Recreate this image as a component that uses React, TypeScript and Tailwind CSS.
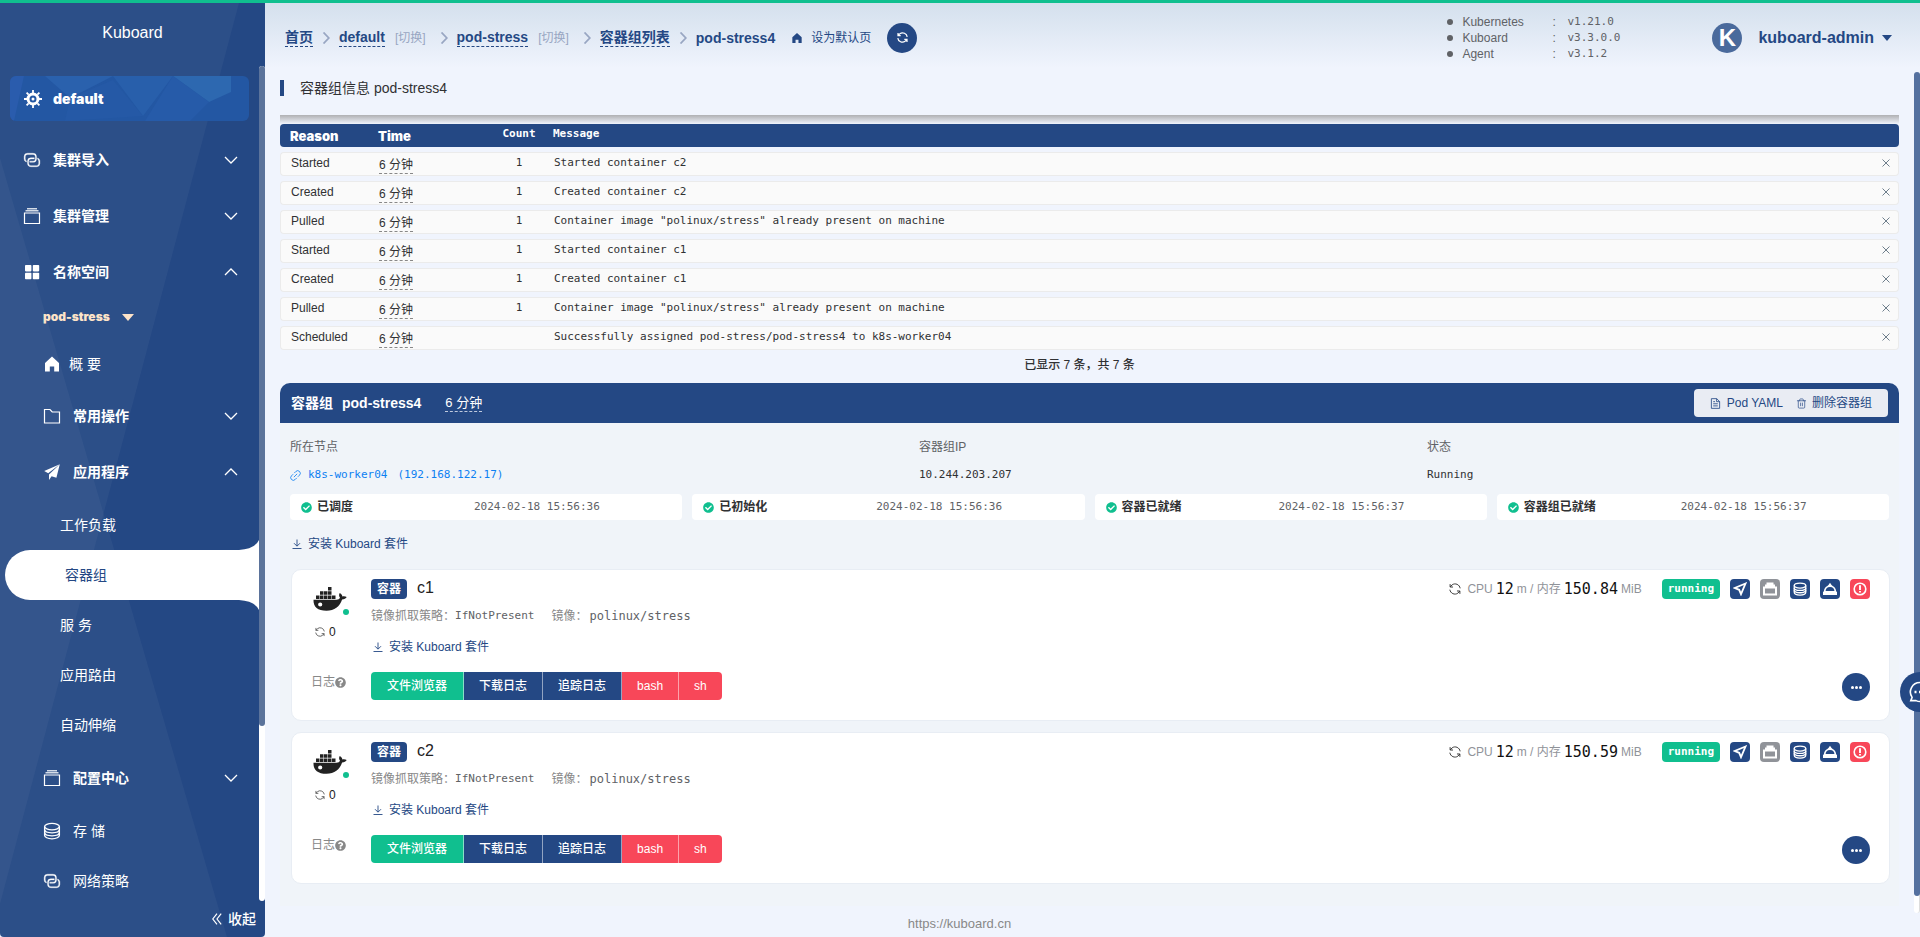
import React from 'react';
import { Trash2 } from 'lucide-react';
import { FaCheckCircle, FaQuestionCircle } from 'react-icons/fa';

interface PodEvent {
  reason: string;
  count?: number;
  message: string;
}

interface Container {
  name: string;
  memory: string;
}

const events: PodEvent[] = [
  { reason: 'Started', count: 1, message: 'Started container c2' },
  { reason: 'Created', count: 1, message: 'Created container c2' },
  { reason: 'Pulled', count: 1, message: 'Container image "polinux/stress" already present on machine' },
  { reason: 'Started', count: 1, message: 'Started container c1' },
  { reason: 'Created', count: 1, message: 'Created container c1' },
  { reason: 'Pulled', count: 1, message: 'Container image "polinux/stress" already present on machine' },
  { reason: 'Scheduled', message: 'Successfully assigned pod-stress/pod-stress4 to k8s-worker04' },
];

const conditions = [
  { label: '已调度', time: '2024-02-18 15:56:36' },
  { label: '已初始化', time: '2024-02-18 15:56:36' },
  { label: '容器已就绪', time: '2024-02-18 15:56:37' },
  { label: '容器组已就绪', time: '2024-02-18 15:56:37' },
];

const versions = [
  { name: 'Kubernetes', value: 'v1.21.0' },
  { name: 'Kuboard', value: 'v3.3.0.0' },
  { name: 'Agent', value: 'v3.1.2' },
];

const containers: Container[] = [
  { name: 'c1', memory: '150.84' },
  { name: 'c2', memory: '150.59' },
];

const mono = "font-['DejaVu_Sans_Mono','Noto_Sans_CJK_SC',monospace]";
const black = "font-['Inter','Noto_Sans_CJK_SC',sans-serif] font-black";

/* ---------- icons ---------- */

interface IconProps {
  className?: string;
}

function GearIcon({ className }: IconProps) {
  return (
    <svg viewBox="0 0 18 18" className={className} fill="none" stroke="currentColor">
      <circle cx="9" cy="9" r="5" strokeWidth="3" />
      <circle cx="9" cy="9" r="1.5" fill="currentColor" stroke="none" />
      <path
        d="M9 0v3M9 15v3M0 9h3M15 9h3M2.6 2.6l2 2M13.4 13.4l2 2M15.4 2.6l-2 2M4.6 13.4l-2 2"
        strokeWidth="1.8"
      />
    </svg>
  );
}

function ConnectionIcon({ className }: IconProps) {
  return (
    <svg viewBox="0 0 1024 1024" className={className} fill="currentColor" stroke="currentColor" strokeWidth="20">
      <path d="M640 384v64H448a128 128 0 0 0-128 128v128a128 128 0 0 0 128 128h320a128 128 0 0 0 128-128V576a128 128 0 0 0-64-110.848V394.88c74.56 26.368 128 97.472 128 181.056v128a192 192 0 0 1-192 192H448a192 192 0 0 1-192-192V576a192 192 0 0 1 192-192h192z" />
      <path d="M384 640v-64h192a128 128 0 0 0 128-128V320a128 128 0 0 0-128-128H256a128 128 0 0 0-128 128v128a128 128 0 0 0 64 110.848v70.272A192.064 192.064 0 0 1 64 448V320a192 192 0 0 1 192-192h320a192 192 0 0 1 192 192v128a192 192 0 0 1-192 192H384z" />
    </svg>
  );
}

function FilesIcon({ className }: IconProps) {
  return (
    <svg viewBox="0 0 18 18" className={className} fill="none" stroke="currentColor">
      <path d="M1.5 6h15v10.5h-15z" strokeWidth="1.2" />
      <path d="M2.5 3.8h13M4 1.8h10" strokeWidth="1.4" strokeOpacity="0.8" />
    </svg>
  );
}

function GridIcon({ className }: IconProps) {
  return (
    <svg viewBox="0 0 18 18" className={className} fill="currentColor">
      <rect x="2" y="2" width="6.4" height="6.4" rx="0.8" />
      <rect x="9.8" y="2" width="6.4" height="6.4" rx="0.8" />
      <rect x="2" y="9.8" width="6.4" height="6.4" rx="0.8" />
      <rect x="9.8" y="9.8" width="6.4" height="6.4" rx="0.8" />
    </svg>
  );
}

function HomeIcon({ className }: IconProps) {
  return (
    <svg viewBox="0 0 18 18" className={className} fill="currentColor">
      <path d="M9 1.5 2 8v8.5h4.8v-5h4.4v5H16V8z" />
    </svg>
  );
}

function FolderIcon({ className }: IconProps) {
  return (
    <svg viewBox="0 0 18 18" className={className} fill="none" stroke="currentColor" strokeWidth="1.2">
      <path d="M1.5 2.5h5.5l2.2 2.5h7.3v11h-15z" />
    </svg>
  );
}

function PlaneIcon({ className }: IconProps) {
  return (
    <svg viewBox="0 0 18 18" className={className} fill="currentColor">
      <path d="M16.8 1.2 1.2 8l4 2.2zM16.8 1.2 6 11.4V17l2.6-3.8 4.8 1.6z" />
    </svg>
  );
}

function CoinIcon({ className, strokeWidth = 1.3 }: IconProps & { strokeWidth?: number }) {
  return (
    <svg viewBox="0 0 18 18" className={className} fill="none" stroke="currentColor" strokeWidth={strokeWidth}>
      <ellipse cx="9" cy="4.6" rx="7.4" ry="3.2" />
      <path d="M1.6 4.6v8.6c0 1.9 3.1 3.6 7.400 3.600s7.400-1.700 7.400-3.600V4.600" />
      <path d="M1.600 7.600c0 1.800 3.100 3.200 7.400 3.200s7.400-1.400 7.400-3.200M1.600 10.600c0 1.800 3.100 3.200 7.400 3.200s7.400-1.400 7.400-3.200" />
    </svg>
  );
}

function ChevronIcon({ up, className }: IconProps & { up?: boolean }) {
  return (
    <svg viewBox="0 0 14 14" className={className} fill="none" stroke="currentColor" strokeWidth="1.3">
      <path d={up ? 'M1 10l6-6 6 6' : 'M1 4l6 6 6-6'} />
    </svg>
  );
}

function RefreshIcon({ className, strokeWidth = 1.1 }: IconProps & { strokeWidth?: number }) {
  return (
    <svg viewBox="0 0 14 14" className={className} fill="none" stroke="currentColor" strokeWidth={strokeWidth}>
      <path d="M1 7.8a6 6 0 0 0 9.3 4.1M13 6.2a6 6 0 0 0-9.3-4.1" />
      <path d="M1.3 1.3v3.4h3.4M12.7 12.7V9.3H9.3M1.3 4.7l2.4-2.6M12.7 9.3l-2.4 2.6" />
    </svg>
  );
}

function DownloadIcon({ className }: IconProps) {
  return (
    <svg viewBox="0 0 12 12" className={className} fill="none" stroke="currentColor" strokeWidth="0.9">
      <path d="M6 1.5v6.5M3 5.2l3 3 3-3M1.5 10.5h9" />
    </svg>
  );
}

function DocumentIcon({ className }: IconProps) {
  return (
    <svg viewBox="0 0 12 12" className={className} fill="none" stroke="currentColor" strokeWidth="0.9">
      <path d="M1.5.7h5.8l3.2 3.2v7.4h-9zM7.2.7V4h3.3M3.5 4h2M3.5 6.3h5M3.5 8.6h5" />
    </svg>
  );
}

function LinkIcon({ className }: IconProps) {
  return (
    <svg viewBox="0 0 12 12" className={className} fill="none" stroke="currentColor" strokeWidth="0.9">
      <path d="M4.6 3.4l1.8-1.8a2.8 2.8 0 0 1 4 4L8.6 7.4M7.4 8.6l-1.8 1.8a2.8 2.8 0 0 1-4-4l1.8-1.8M4.2 7.8l3.6-3.6" />
    </svg>
  );
}

function DockerIcon({ className }: IconProps) {
  return (
    <svg viewBox="0 0 34 24" className={className} fill="currentColor">
      <path d="M15 0h3.5v3.5H15zM7 4.2h3.5v3.5H7zM11 4.2h3.5v3.5H11zM15 4.2h3.5v3.5H15zM3 8.4h3.5v3.5H3zM7 8.4h3.5v3.5H7zM11 8.4h3.5v3.5H11zM15 8.4h3.5v3.5H15zM19 8.4h3.5v3.5H19z" />
      <path
        fillRule="evenodd"
        d="M.5 12.8h23c1.8 0 3-.8 3.5-2-1.2-1.6-1.2-3.4-.2-4.8 1.5.8 2.4 2 2.6 3.4 1.6-.3 3.2-.1 4.3.7-.8 1.7-2.5 2.4-4.6 2.4C26.8 19.6 21.4 23.8 13.5 23.8 4.8 23.8.2 20 .5 12.8zM7.2 15.4a2.1 2.1 0 1 0 0 4.2 2.1 2.1 0 0 0 0-4.2z"
      />
    </svg>
  );
}

function SendIcon({ className }: IconProps) {
  return (
    <svg viewBox="0 0 14 14" className={className} fill="none" stroke="currentColor" strokeWidth="1.8">
      <path d="M12.5 1.5 1.8 6l4.400 1.800L8 12.200z" />
    </svg>
  );
}

function BoxIcon({ className }: IconProps) {
  return (
    <svg viewBox="0 0 14 14" className={className} fill="none" stroke="currentColor" strokeWidth="2">
      <path d="M1 5.5h12v7H1zM2 3.5h10M3.5 1.5h7" />
    </svg>
  );
}

function DishIcon({ className }: IconProps) {
  return (
    <svg viewBox="0 0 14 14" className={className} fill="none" stroke="currentColor" strokeWidth="1.8">
      <path d="M1.600 9.800C1.600 6.600 4 4.200 7 4.200s5.400 2.400 5.400 5.600z" />
      <path d="M0 9.800h14V13H0zM7 .8l2.400 3.400H4.600z" fill="currentColor" stroke="none" />
    </svg>
  );
}

function WarnIcon({ className }: IconProps) {
  return (
    <svg viewBox="0 0 14 14" className={className} fill="none" stroke="currentColor" strokeWidth="1.6">
      <circle cx="7" cy="7" r="5.8" />
      <path d="M7 3.300v4.700M7 9v1.600" strokeWidth="1.900" />
    </svg>
  );
}

/* ---------- sidebar ---------- */

interface MenuItemProps {
  label: string;
  icon?: React.ReactNode;
  nested?: boolean;
  open?: boolean;
}

function MenuGroup({ label, icon, nested, open }: MenuItemProps) {
  return (
    <button className={`flex h-14 w-full shrink-0 items-center gap-3 pr-[21px] text-sm font-bold ${nested ? 'pl-[43px]' : 'pl-[23px]'}`}>
      {icon}
      <span>{label}</span>
      <ChevronIcon up={open} className="ml-auto size-3.5" />
    </button>
  );
}

function MenuLink({ label, icon }: MenuItemProps) {
  return (
    <a href="#" className={`flex h-[50px] shrink-0 items-center gap-3 text-sm ${icon ? 'pl-[43px]' : 'pl-[60px]'}`}>
      {icon}
      <span>{label}</span>
    </a>
  );
}

function Sidebar() {
  return (
    <aside className="relative flex w-[265px] shrink-0 flex-col overflow-hidden rounded-b bg-[#244884] text-white">
      <svg viewBox="0 0 265 934" preserveAspectRatio="none" className="absolute inset-0 size-full" fill="#fff" fillOpacity="0.04">
        <path d="M0 0h239L0 901z" />
        <path d="M0 155 227 934H0z" />
      </svg>

      <div className="relative flex h-[63px] shrink-0 items-center justify-center pb-1 text-base">Kuboard</div>

      <div className="relative flex min-h-0 flex-1">
        <nav className="flex flex-1 flex-col overflow-hidden pt-[10px]">
          <a
            href="#"
            className="relative mr-[10px] mb-[11px] ml-[10px] flex h-[45px] shrink-0 items-center gap-[11px] overflow-hidden rounded-md bg-[#2357a3] pl-[14px]"
          >
            <svg viewBox="0 0 239 45" preserveAspectRatio="none" className="absolute inset-0 size-full">
              <path d="M35 0h68L60 22z" fill="#2a61ad" />
              <path d="M103 0h60l-30 40z" fill="#285fab" />
              <path d="M163 0h58v16l-22 10z" fill="#2d68b0" />
              <path d="M163 0 199 26 180 45h-45z" fill="#265ba9" />
              <path d="M60 22 103 4l30 36-78 5z" fill="#2559a6" />
              <path d="M0 0h14L4 45H0z" fill="#2a5cad" />
            </svg>
            <GearIcon className="relative size-[18px]" />
            <span className={`relative text-sm ${black}`}>default</span>
          </a>

          <MenuGroup label="集群导入" icon={<ConnectionIcon className="size-[18px]" />} />
          <MenuGroup label="集群管理" icon={<FilesIcon className="size-[18px]" />} />
          <MenuGroup label="名称空间" icon={<GridIcon className="size-[18px]" />} open />

          <button className={`flex h-[38px] shrink-0 items-center gap-3 pb-1 pl-[43px] text-xs text-[#fde3c8] ${black}`}>
            pod-stress
            <span className="border-x-6 border-t-7 border-x-transparent border-t-[#fde3c8]" />
          </button>

          <a href="#" className="flex h-[50px] shrink-0 items-center gap-2 pt-[2px] pl-[43px] text-sm">
            <HomeIcon className="size-[18px]" />
            概 要
          </a>
          <MenuGroup nested label="常用操作" icon={<FolderIcon className="size-[18px]" />} />
          <MenuGroup nested label="应用程序" icon={<PlaneIcon className="size-[18px]" />} open />

          <MenuLink label="工作负载" />
          <a href="#" className="relative ml-[5px] flex h-[50px] shrink-0 items-center rounded-l-full bg-white pl-[60px] text-sm text-[#244884]">
            容器组
            <svg viewBox="0 0 20 10" className="absolute right-0 bottom-full h-[10px] w-5" fill="#fff">
              <path d="M0 10Q16 9 20 0v10z" />
            </svg>
            <svg viewBox="0 0 20 10" className="absolute top-full right-0 h-[10px] w-5" fill="#fff">
              <path d="M0 0Q16 1 20 10V0z" />
            </svg>
          </a>
          <MenuLink label="服 务" />
          <MenuLink label="应用路由" />
          <MenuLink label="自动伸缩" />

          <MenuGroup nested label="配置中心" icon={<FilesIcon className="size-[18px]" />} />
          <MenuLink label="存 储" icon={<CoinIcon className="size-[18px]" />} />
          <MenuLink label="网络策略" icon={<ConnectionIcon className="size-[18px]" />} />
        </nav>
        <div className="w-[6px] rounded-full bg-white">
          <div className="h-[79%] rounded-full bg-[#5b739b]" />
        </div>
      </div>

      <button className="relative flex h-9 shrink-0 items-center justify-end gap-[6px] pr-[9px] text-sm font-medium">
        <svg viewBox="0 0 10 12" className="h-3 w-[10px]" fill="none" stroke="currentColor" strokeWidth="1.2">
          <path d="M5 .7.8 6 5 11.3M9.2.7 5 6l4.2 5.3" />
        </svg>
        收起
      </button>
    </aside>
  );
}

/* ---------- header ---------- */

function Crumb({ label, switchable }: { label: string; switchable?: boolean }) {
  return (
    <>
      <a href="#" className="border-b border-dashed border-[#244884] leading-[17px] font-bold">
        {label}
      </a>
      {switchable && <button className="ml-[10px] text-xs text-[#98a6c2]">[切换]</button>}
      <svg
        viewBox="0 0 8 12"
        className={`mr-[9px] h-3 w-2 ${switchable ? 'ml-[14px]' : 'ml-[9px]'}`}
        fill="none"
        stroke="#98a6c2"
        strokeWidth="1.8"
      >
        <path d="M1.5.5 6.8 6l-5.3 5.5" />
      </svg>
    </>
  );
}

function Header() {
  return (
    <header className="flex h-[65px] shrink-0 items-center bg-linear-to-b from-[#d4e0ed] to-[#f0f4fd] pt-1 pr-7 pl-5 text-[#244884]">
      <nav className="flex items-center text-sm">
        <Crumb label="首页" />
        <Crumb label="default" switchable />
        <Crumb label="pod-stress" switchable />
        <Crumb label="容器组列表" />
        <span className="font-bold">pod-stress4</span>
        <button className="ml-4 flex items-center gap-2 text-xs">
          <HomeIcon className="size-3" />
          设为默认页
        </button>
        <button aria-label="刷新" className="ml-4 flex size-[30px] items-center justify-center rounded-full bg-[#244884] text-white">
          <RefreshIcon className="size-[11px]" strokeWidth={1.6} />
        </button>
      </nav>

      <ul className="ml-auto text-xs leading-4 text-[#606266]">
        {versions.map((v) => (
          <li key={v.name} className="flex items-center">
            <span className="mr-[9px] size-[6px] rounded-full bg-[#606266]" />
            <span className="w-[90px]">{v.name}</span>
            <span className="w-[15px]">:</span>
            <span className={`w-[145px] text-[11px] ${mono}`}>{v.value}</span>
          </li>
        ))}
      </ul>

      <button className="flex items-center text-base font-bold">
        <span className="mr-4 flex size-[30px] items-center justify-center rounded-full bg-[#4a6a9c] text-2xl leading-none text-white">K</span>
        kuboard-admin
        <span className="ml-2 border-x-5 border-t-6 border-x-transparent border-t-[#244884]" />
      </button>
    </header>
  );
}

/* ---------- content ---------- */

function EventTable() {
  return (
    <table className="w-full border-separate border-spacing-x-0 border-spacing-y-[5px] text-left text-xs leading-4">
      <thead>
        <tr className="h-[23px] bg-[#244884] text-white">
          <th className={`w-[88px] rounded-l pl-[10px] text-[13px] ${black}`}>Reason</th>
          <th className={`w-[124px] pl-[10px] text-[13px] ${black}`}>Time</th>
          <th className={`w-[54px] text-center align-top text-[11px] leading-5 ${mono}`}>Count</th>
          <th className={`pl-[7px] align-top text-[11px] leading-5 ${mono}`}>Message</th>
          <th className="w-[30px] rounded-r" />
        </tr>
      </thead>
      <tbody>
        {events.map((e, i) => (
          <tr key={i} className="h-6">
            <td className="rounded-l border-y border-l border-[#ebebeb] bg-[#fafafa] pb-[2px] pl-[10px]">{e.reason}</td>
            <td className="border-y border-[#ebebeb] bg-[#fafafa] pt-[2px] pl-[11px]">
              <span className="block h-[17px] w-fit border-b border-dashed border-[#888]">6 分钟</span>
            </td>
            <td className={`border-y border-[#ebebeb] bg-[#fafafa] pb-[2px] text-center text-[11px] ${mono}`}>{e.count}</td>
            <td className={`border-y border-[#ebebeb] bg-[#fafafa] pb-[2px] pl-[8px] text-[11px] ${mono}`}>{e.message}</td>
            <td className="rounded-r border-y border-r border-[#ebebeb] bg-[#fafafa] pr-2 pb-[2px]">
              <button aria-label="关闭" className="ml-auto block text-[#6f7f8c]">
                <svg viewBox="0 0 8 8" className="block size-2" fill="none" stroke="currentColor">
                  <path d="M.5.5l7 7M7.5.5l-7 7" />
                </svg>
              </button>
            </td>
          </tr>
        ))}
      </tbody>
    </table>
  );
}

function InstallLink({ className }: { className: string }) {
  return (
    <a href="#" className={`flex items-center gap-[5px] text-xs leading-4 text-[#244884] ${className}`}>
      <DownloadIcon className="size-3" />
      安装 Kuboard 套件
    </a>
  );
}

function IconButton({ label, color, children }: { label: string; color: string; children: React.ReactNode }) {
  return (
    <button aria-label={label} className={`flex size-5 items-center justify-center rounded text-white ${color}`}>
      {children}
    </button>
  );
}

function ContainerCard({ name, memory }: Container) {
  return (
    <section className="flex h-[152px] rounded-[10px] border border-[#e8edf4] bg-white px-[19px]">
      <div className="flex w-[60px] flex-col">
        <div className="relative mt-[17px] ml-[2px] h-7 w-9">
          <DockerIcon className="h-6 w-[34px] text-[#222]" />
          <span className="absolute right-0 bottom-0 size-[6px] rounded-full bg-[#10bf8f]" />
        </div>
        <div className="mt-[9px] ml-1 flex items-center gap-1 text-xs leading-4 text-[#222]">
          <RefreshIcon className="size-[10px] text-[#444]" />0
        </div>
        <div className="mt-[34px] flex items-center text-xs leading-4 text-[#888]">
          日志
          <FaQuestionCircle className="size-[11px]" />
        </div>
      </div>

      <div>
        <div className="mt-[9px] flex h-5 items-center gap-[10px]">
          <span className="flex h-5 items-center rounded bg-[#244884] px-[6px] text-xs font-bold text-white">容器</span>
          <span className="pb-[2px] text-base text-[#222]">{name}</span>
        </div>
        <div className="mt-[9px] flex h-4 items-center text-xs text-[#888]">
          镜像抓取策略：
          <span className={`mr-[17px] text-[11px] text-[#606266] ${mono}`}>IfNotPresent</span>
          镜像：
          <span className={`ml-[2px] text-xs text-[#606266] ${mono}`}>polinux/stress</span>
        </div>
        <InstallLink className="mt-[15px] ml-[1px]" />
        <div className="mt-[17px] flex h-7 w-fit divide-x divide-white/50 overflow-hidden rounded text-xs font-medium text-white">
          <button className="bg-[#10bf8f] px-4">文件浏览器</button>
          <button className="bg-[#244884] px-[15px]">下载日志</button>
          <button className="bg-[#244884] px-[15px]">追踪日志</button>
          <button className="bg-[#f84759] px-[15px]">bash</button>
          <button className="bg-[#f84759] px-[15px]">sh</button>
        </div>
      </div>

      <div className="ml-auto flex flex-col items-end justify-between pt-[9px] pb-[19px]">
        <div className="flex items-center gap-[10px]">
          <div className="mr-[10px] flex items-center gap-[3px] text-xs text-[#909399]">
            <RefreshIcon className="mr-[3px] size-3 text-[#333]" />
            CPU
            <span className={`text-[15px] leading-5 text-[#111] ${mono}`}>12</span>
            m / 内存
            <span className={`text-[15px] leading-5 text-[#111] ${mono}`}>{memory}</span>
            MiB
          </div>
          <span className={`flex h-5 items-center rounded bg-[#10bf8f] px-[6px] text-[11px] font-bold text-white ${mono}`}>running</span>
          <IconButton label="定位" color="bg-[#244884]"><SendIcon className="size-[14px]" /></IconButton>
          <IconButton label="环境变量" color="bg-[#909399]"><BoxIcon className="size-[14px]" /></IconButton>
          <IconButton label="存储卷" color="bg-[#244884]"><CoinIcon className="size-[14px]" strokeWidth={1.7} /></IconButton>
          <IconButton label="资源" color="bg-[#244884]"><DishIcon className="size-[14px]" /></IconButton>
          <IconButton label="告警" color="bg-[#f84759]"><WarnIcon className="size-[14px]" /></IconButton>
        </div>
        <button aria-label="更多" className="flex size-7 items-center justify-center gap-[1px] rounded-full bg-[#244884]">
          <span className="size-[3px] rounded-full bg-white" />
          <span className="size-[3px] rounded-full bg-white" />
          <span className="size-[3px] rounded-full bg-white" />
        </button>
      </div>
    </section>
  );
}

function PodPanel() {
  return (
    <section className="rounded-t-[10px] bg-[#f0f4f9] pb-[22px]">
      <div className="flex h-10 items-center rounded-t-[10px] bg-[#244884] px-[11px] text-sm text-white">
        <h2 className="flex gap-[9px] font-bold">
          <span>容器组</span>
          <span>pod-stress4</span>
        </h2>
        <span className="ml-6 border-b border-dashed border-[#c0cade] text-[13px] leading-[17px]">6 分钟</span>
        <div className="ml-auto flex h-7 items-center gap-[13px] rounded bg-[#e9ecf3] px-4 text-xs text-[#244884]">
          <button className="flex items-center gap-[6px]">
            <DocumentIcon className="size-[11px]" />
            Pod YAML
          </button>
          <button className="flex items-center gap-[5px]">
            <Trash2 size={11} strokeWidth={1.5} />
            删除容器组
          </button>
        </div>
      </div>

      <dl className="grid grid-cols-[629fr_508fr_462fr] px-[10px] pt-4 text-xs leading-4">
        <div>
          <dt className="text-[#606266]">所在节点</dt>
          <dd className="mt-3">
            <a href="#" className={`flex items-center gap-[7px] text-[11px] text-[#0d80f2] ${mono}`}>
              <LinkIcon className="size-[11px]" />
              <span className="mr-[3px]">k8s-worker04</span>
              <span>(192.168.122.17)</span>
            </a>
          </dd>
        </div>
        <div>
          <dt className="text-[#606266]">容器组IP</dt>
          <dd className={`mt-3 text-[11px] ${mono}`}>10.244.203.207</dd>
        </div>
        <div>
          <dt className="text-[#606266]">状态</dt>
          <dd className={`mt-3 text-[11px] ${mono}`}>Running</dd>
        </div>
      </dl>

      <div className="mt-[11px] grid grid-cols-4 gap-[10px] px-[10px]">
        {conditions.map((c) => (
          <div key={c.label} className="flex h-[26px] items-center rounded bg-white text-xs">
            <span className="flex w-[184px] items-center gap-[5px] pl-[11px] font-bold">
              <FaCheckCircle className="size-[11px] text-[#10bf8f]" />
              {c.label}
            </span>
            <span className={`text-[11px] text-[#606266] ${mono}`}>{c.time}</span>
          </div>
        ))}
      </div>

      <InstallLink className="mt-4 ml-[11px]" />

      <div className="mt-[17px] flex flex-col gap-[11px] pr-[9px] pl-[11px]">
        {containers.map((c) => (
          <ContainerCard key={c.name} {...c} />
        ))}
      </div>
    </section>
  );
}

export default function App() {
  return (
    <div className="flex h-screen flex-col overflow-hidden bg-[#f0f4fd] font-['Liberation_Sans','Noto_Sans_CJK_SC',sans-serif] text-[#303133]">
      <div className="h-[3px] shrink-0 bg-[#10bf8f]" />
      <div className="flex min-h-0 flex-1">
        <Sidebar />
        <div className="flex min-w-0 flex-1 flex-col">
          <Header />
          <div className="flex min-h-0 flex-1">
            <main className="flex flex-1 flex-col overflow-hidden px-[15px]">
              <h1 className="mt-3 flex h-4 items-center border-l-4 border-[#244884] pl-4 text-sm">容器组信息 pod-stress4</h1>
              <div className="mt-[19px] h-[9px] shrink-0 bg-linear-to-b from-[#b0b0b3] to-[#f0f4fd]" />
              <div className="-mt-[5px]">
                <EventTable />
              </div>
              <p className="mt-[1px] mb-[9px] pr-5 text-center text-xs leading-[18px] font-medium">已显示 7 条，共 7 条</p>
              <PodPanel />
              <footer className="pt-[9px] text-center text-[13px] leading-[18px] text-[#888]">
                <a href="#" className="mr-[260px]">https://kuboard.cn</a>
              </footer>
            </main>
            <div className="mt-1 mb-6 w-[6px] rounded-full border-r border-[#ddd] bg-white">
              <div className="h-[98%] w-[6px] rounded-full bg-[#54709f]" />
            </div>
          </div>
        </div>
      </div>
      <button aria-label="反馈" className="fixed top-[672px] -right-5 flex size-10 items-center rounded-full bg-[#244884] pl-[9px] text-white">
        <svg viewBox="0 0 22 22" className="size-[22px] shrink-0" fill="none" stroke="currentColor" strokeWidth="1.6">
          <path d="M11 1.5a9.500 9.500 0 1 1-4 18.100H1.800l1.300-3.200A9.500 9.500 0 0 1 11 1.500z" />
          <path d="M5.5 11h2M10 11h2M14.5 11h2" strokeWidth="2.4" />
        </svg>
      </button>
    </div>
  );
}
